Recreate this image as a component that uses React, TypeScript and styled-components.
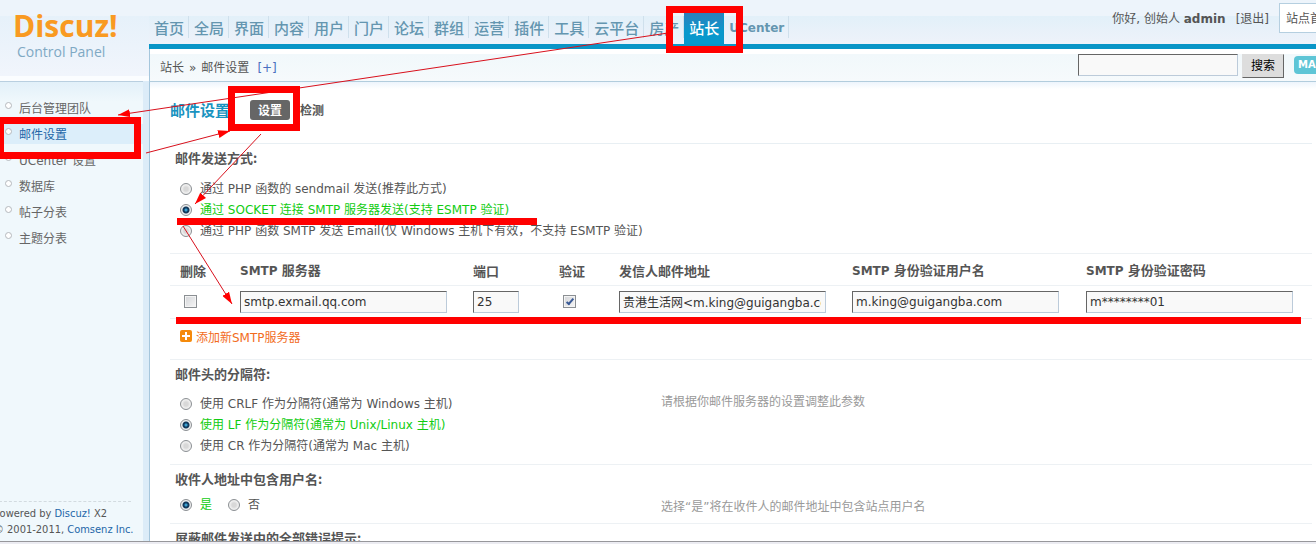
import React from 'react';
import styled, { createGlobalStyle } from 'styled-components';

const sans = '"DejaVu Sans", "Noto Sans CJK SC", sans-serif';
const cjk = '"Noto Sans CJK SC", "DejaVu Sans", sans-serif';
const narrow = '"DejaVu Sans Condensed", "Noto Sans CJK SC", sans-serif';

const GlobalStyle = createGlobalStyle`
  *, *::before, *::after { box-sizing: border-box; }
  body {
    margin: 0;
    background: #fff;
    color: #555;
    font: 12px/20px ${sans};
    overflow: hidden;
  }
  a { color: inherit; text-decoration: none; }
  button, input { font: inherit; }
  ul { list-style: none; margin: 0; padding: 0; }
`;

const Page = styled.div`
  position: relative;
  display: flex;
  flex-direction: column;
  height: 100vh;
  overflow: hidden;
`;

const Columns = styled.div`
  display: flex;
  flex: 1;
  min-height: 0;
  background: linear-gradient(#edf4fb 0 16px, #e2f0f9 16px, #eef2fa 44px, transparent 44px);
`;

const Sidebar = styled.aside`
  display: flex;
  flex-direction: column;
  flex: none;
  width: 149px;
  background: #f0f8fc;
`;

const Logo = styled.div`
  height: 81px;
  padding: 10px 0 0 13px;
  border-bottom: 5px solid #fbfdff;
  background: linear-gradient(#edf4fb 0 16px, #e6f1fa 16px, #f1f5fc);
  font-family: "Open Sans", sans-serif;
`;

const LogoName = styled.div`
  color: #f99a22;
  font-size: 30px;
  font-weight: 700;
  line-height: 32px;
`;

const LogoSub = styled.div`
  padding-left: 4px;
  color: #7fa9c4;
  font-size: 14px;
  line-height: 20px;
`;

const SideBody = styled.div`
  display: flex;
  flex: 1;
  flex-direction: column;
  justify-content: space-between;
  border-right: 6px solid #dcecf8;
`;

const Menu = styled.ul`
  padding-top: 16px !important;
  border-top: 1px solid #b9cfe0;
  background: linear-gradient(#e2f0f9, #f0f8fc 20px);
`;

const MenuLink = styled.a<{ $active?: boolean }>`
  display: flex;
  align-items: center;
  gap: 7px;
  height: 20px;
  margin-bottom: 6px;
  padding: 2px 0 0 5px;
  color: ${(p) => (p.$active ? '#2366a8' : '#666')};
  background: ${(p) => (p.$active ? '#dceefa' : 'none')};

  &::before {
    content: '';
    width: 7px;
    height: 7px;
    margin-bottom: 7px;
    border: 1px solid #b5b9bd;
    border-radius: 50%;
    background: #fff;
  }
`;

const Copyright = styled.footer`
  margin: 0 12px 3px -6px;
  padding-top: 4px;
  border-top: 1px dashed #d3dbe0;
  font: 11px/16px ${narrow};
  white-space: nowrap;

  a { color: #2366a8; }
`;

const Main = styled.div`
  display: flex;
  flex: 1;
  flex-direction: column;
  min-width: 0;
`;

const TopBar = styled.header`
  display: flex;
  justify-content: space-between;
  flex: none;
  height: 49px;
  border-bottom: 5px solid #0995c7;
`;

const Nav = styled.nav`
  display: flex;
  padding-top: 13px;
`;

const NavLink = styled.a<{ $active?: boolean; $latin?: boolean }>`
  padding: 0 4px 0 5px;
  border-right: 1px solid ${(p) => (p.$active ? '#0995c7' : '#cfe0ec')};
  border-image: ${(p) => (p.$active ? 'none' : 'linear-gradient(transparent 4px, #cfe0ec 4px 24px, transparent 24px) 1')};
  color: ${(p) => (p.$active ? '#fff' : '#6496b0')};
  background: ${(p) => (p.$active ? 'linear-gradient(#2e7fbc, #0898cc 60%)' : 'none')};
  font-family: ${(p) => (p.$latin ? sans : cjk)};
  font-size: ${(p) => (p.$latin ? 12 : 15)}px;
  font-weight: ${(p) => (p.$latin ? 700 : 500)};
  line-height: 30px;
  white-space: nowrap;
`;

const Account = styled.div`
  display: flex;
  gap: 10px;
  height: 30px;
  margin: 3px -26px 0 0;
  line-height: 32px;
  white-space: nowrap;
`;

const HomeLink = styled.a`
  padding: 0 6px;
  width: 63px;
  border: 1px solid #b5cfe0;
  background: #fff;
  line-height: 30px;
`;

const SubBar = styled.div`
  display: flex;
  justify-content: space-between;
  flex: none;
  height: 33px;
  padding: 5px 0 0 10px;
  border-left: 1px solid #a5c6dc;
  border-bottom: 1px solid #b2cddd;
  background: linear-gradient(#fff 0 5px, #f1f8fb 5px, #f6fafc);
`;

const Crumbs = styled.div`
  display: flex;
  gap: 5px;
  padding-top: 4px;

  a:last-child { margin-left: 3px; color: #4a6fc0; }
`;

const Search = styled.form`
  display: flex;
  align-items: flex-start;
  gap: 4px;
  margin-right: -16px;
`;

const TextField = styled.input<{ $width: number }>`
  display: block;
  width: ${(p) => p.$width}px;
  height: 22px;
  padding: 0 4px 0 3px;
  border: 1px solid;
  border-color: #666 #bccbda #bccbda #666;
  border-radius: 0;
  background: #f9f9f9;
  color: #333;
`;

const SearchButton = styled.button`
  width: 42px;
  height: 24px;
  padding: 0;
  border: 1px solid;
  border-color: #ddd #666 #666 #ddd;
  background: #ddd;
  color: #000;
`;

const MapLink = styled.a`
  width: 38px;
  height: 18px;
  margin: 2px 0 0 6px;
  padding-left: 4px;
  border-radius: 4px;
  background: #5ec5d6;
  color: #fff;
  font-size: 10px;
  font-weight: 700;
  line-height: 18px;
`;

const Content = styled.main`
  flex: 1;
  min-height: 0;
  padding: 0 4px 0 20px;
  overflow: hidden;
  border-left: 1px solid #a5c6dc;
  background: linear-gradient(#edf5fc, #fff 7px);
`;

const TitleRow = styled.div`
  display: flex;
  align-items: center;
  gap: 20px;
  height: 62px;
  padding-bottom: 6px;
  border-bottom: 1px solid #e8eff3;
`;

const Title = styled.h1`
  margin: 0;
  color: #1993c0;
  font: 700 15px/20px ${cjk};
`;

const Tabs = styled.div`
  display: flex;
  gap: 2px;
`;

const Tab = styled.button<{ $active?: boolean }>`
  height: 20px;
  padding: 0 8px;
  border: 0;
  border-radius: 3px;
  background: ${(p) => (p.$active ? '#666' : 'none')};
  color: ${(p) => (p.$active ? '#fff' : '#555')};
  font: 700 12px/20px ${cjk};
`;

const Setting = styled.fieldset<{ $roomy?: boolean }>`
  display: block;
  min-width: 0;
  margin: 0;
  padding: 3px 0 ${(p) => (p.$roomy ? 12 : 7)}px;
  border: 0;
  border-bottom: 1px solid #edf1f4;
`;

const SettingTitle = styled.legend`
  float: left;
  width: 100%;
  padding: 0 5px;
  color: #555;
  font: 700 13px/21px ${cjk};
`;

const SettingBody = styled.div<{ $compact?: boolean }>`
  display: grid;
  grid-template-columns: 481px 1fr;
  clear: both;
  padding: ${(p) => (p.$compact ? 6 : 10)}px 0 0 10px;
`;

const Options = styled.div<{ $inline?: boolean }>`
  display: flex;
  flex-direction: ${(p) => (p.$inline ? 'row' : 'column')};
  column-gap: 16px;
  white-space: nowrap;
`;

const Option = styled.label<{ $checked?: boolean }>`
  display: flex;
  align-items: center;
  gap: 8px;
  height: 21px;
  color: ${(p) => (p.$checked ? '#1c1' : '#555')};
`;

const Radio = styled.input`
  appearance: none;
  width: 12px;
  height: 12px;
  margin: 0;
  border: 1px solid #8b8f93;
  border-radius: 50%;
  background: radial-gradient(circle, #d8d8d8 0 2px, #eee 4px);

  &:checked {
    background: radial-gradient(circle at 50% 50%, #3ba0d0 0 1px, #11395c 2px 3px, #eee 4px);
  }
`;

const Hint = styled.p<{ $low?: boolean }>`
  margin: 0;
  padding-top: ${(p) => (p.$low ? 4 : 0)}px;
  color: #999;
  line-height: 17px;
`;

const ServerTable = styled.table`
  width: 100%;
  table-layout: fixed;
  border-collapse: collapse;
  text-align: left;

  tr { border-bottom: 1px solid #edf1f4; }
  th, td { padding: 0 5px; white-space: nowrap; }
  th { height: 31px; padding-top: 3px; font: 700 13px/20px ${cjk}; }
  td { height: 33px; }
  th:first-child, td:first-child { padding-left: 10px; }
  td input[type='checkbox'] { margin-left: 4px; }
`;

const Latin = styled.span`
  font: 700 12px/20px ${sans};
`;

const Checkbox = styled.input`
  display: grid;
  place-items: center;
  appearance: none;
  width: 13px;
  height: 13px;
  margin: 0;
  border: 1px solid #8b8f93;
  background: linear-gradient(135deg, #d3d5d8, #f6f6f6);
  box-shadow: inset 0 0 0 1px #f4f4f4;

  &:checked::before {
    content: '';
    width: 4px;
    height: 8px;
    margin-bottom: 2px;
    border: solid #3a5a96;
    border-width: 0 2px 2px 0;
    transform: rotate(40deg);
  }
`;

const AddRow = styled.div`
  height: 41px;
  padding: 8px 10px 0;
  border-bottom: 1px solid #edf1f4;
`;

const AddLink = styled.a`
  display: inline-flex;
  align-items: center;
  gap: 4px;
  height: 22px;
  color: #f26c1d;

  svg { margin-bottom: 4px; }
`;

const StatusEdge = styled.div`
  flex: none;
  height: 3px;
  border-top: 1px solid #97979b;
  background: #ececf2;
`;

const Annotations = styled.svg`
  position: absolute;
  top: 0;
  left: 0;
  pointer-events: none;
`;

const navItems = ['首页', '全局', '界面', '内容', '用户', '门户', '论坛', '群组', '运营', '插件', '工具', '云平台', '房产', '站长', 'UCenter'];
const menuItems = ['后台管理团队', '邮件设置', 'UCenter 设置', '数据库', '帖子分表', '主题分表'];

type RadioGroupProps = { name: string; options: string[]; selected: number; inline?: boolean };

function RadioGroup({ name, options, selected, inline }: RadioGroupProps) {
  const [value, setValue] = React.useState(selected);
  return (
    <Options $inline={inline}>
      {options.map((text, i) => (
        <Option key={text} $checked={i === value}>
          <Radio type="radio" name={name} checked={i === value} onChange={() => setValue(i)} />
          {text}
        </Option>
      ))}
    </Options>
  );
}

const arrows = [
  { from: [668, 33], to: [118, 115] },
  { from: [146, 153], to: [230, 131] },
  { from: [261, 134], to: [195, 204] },
  { from: [183, 226], to: [232, 304] },
];

export default function App() {
  return (
    <Page>
      <GlobalStyle />
      <Columns>
        <Sidebar>
          <Logo>
            <LogoName>Discuz!</LogoName>
            <LogoSub>Control Panel</LogoSub>
          </Logo>
          <SideBody>
            <Menu>
              {menuItems.map((text) => (
                <li key={text}>
                  <MenuLink href="#" $active={text === '邮件设置'}>{text}</MenuLink>
                </li>
              ))}
            </Menu>
            <Copyright>
              <div>Powered by <a href="#">Discuz!</a> X2</div>
              <div>© 2001-2011, <a href="#">Comsenz Inc.</a></div>
            </Copyright>
          </SideBody>
        </Sidebar>
        <Main>
          <TopBar>
            <Nav>
              {navItems.map((text) => (
                <NavLink key={text} href="#" $active={text === '站长'} $latin={text === 'UCenter'}>{text}</NavLink>
              ))}
            </Nav>
            <Account>
              <span>你好, 创始人 <b>admin</b></span>
              <a href="#">[退出]</a>
              <HomeLink href="#">站点首页</HomeLink>
            </Account>
          </TopBar>
          <SubBar>
            <Crumbs>
              <span>站长</span>
              <span>»</span>
              <span>邮件设置</span>
              <a href="#">[+]</a>
            </Crumbs>
            <Search>
              <TextField $width={160} aria-label="搜索" />
              <SearchButton type="button">搜索</SearchButton>
              <MapLink href="#">MAP</MapLink>
            </Search>
          </SubBar>
          <Content>
            <TitleRow>
              <Title>邮件设置</Title>
              <Tabs>
                <Tab type="button" $active>设置</Tab>
                <Tab type="button">检测</Tab>
              </Tabs>
            </TitleRow>
            <Setting $roomy>
              <SettingTitle>邮件发送方式:</SettingTitle>
              <SettingBody>
                <RadioGroup
                  name="method"
                  selected={1}
                  options={[
                    '通过 PHP 函数的 sendmail 发送(推荐此方式)',
                    '通过 SOCKET 连接 SMTP 服务器发送(支持 ESMTP 验证)',
                    '通过 PHP 函数 SMTP 发送 Email(仅 Windows 主机下有效，不支持 ESMTP 验证)',
                  ]}
                />
              </SettingBody>
            </Setting>
            <ServerTable>
              <colgroup>
                <col style={{ width: 65 }} />
                <col style={{ width: 233 }} />
                <col style={{ width: 86 }} />
                <col style={{ width: 60 }} />
                <col style={{ width: 233 }} />
                <col style={{ width: 234 }} />
                <col />
              </colgroup>
              <thead>
                <tr>
                  <th>删除</th>
                  <th><Latin>SMTP </Latin>服务器</th>
                  <th>端口</th>
                  <th>验证</th>
                  <th>发信人邮件地址</th>
                  <th><Latin>SMTP </Latin>身份验证用户名</th>
                  <th><Latin>SMTP </Latin>身份验证密码</th>
                </tr>
              </thead>
              <tbody>
                <tr>
                  <td><Checkbox type="checkbox" aria-label="删除" /></td>
                  <td><TextField $width={207} aria-label="SMTP 服务器" defaultValue="smtp.exmail.qq.com" /></td>
                  <td><TextField $width={46} aria-label="端口" defaultValue="25" /></td>
                  <td><Checkbox type="checkbox" aria-label="验证" defaultChecked /></td>
                  <td><TextField $width={207} aria-label="发信人邮件地址" defaultValue="贵港生活网<m.king@guigangba.com>" /></td>
                  <td><TextField $width={207} aria-label="SMTP 身份验证用户名" defaultValue="m.king@guigangba.com" /></td>
                  <td><TextField $width={207} aria-label="SMTP 身份验证密码" defaultValue="m********01" /></td>
                </tr>
              </tbody>
            </ServerTable>
            <AddRow>
              <AddLink href="#">
                <svg width="12" height="12" viewBox="0 0 12 12" aria-hidden="true">
                  <rect width="12" height="12" rx="2" fill="#f58a0b" />
                  <path d="M6 2v8M2 6h8" stroke="#fff" strokeWidth="2" />
                </svg>
                添加新SMTP服务器
              </AddLink>
            </AddRow>
            <Setting>
              <SettingTitle>邮件头的分隔符:</SettingTitle>
              <SettingBody>
                <RadioGroup
                  name="delimiter"
                  selected={1}
                  options={[
                    '使用 CRLF 作为分隔符(通常为 Windows 主机)',
                    '使用 LF 作为分隔符(通常为 Unix/Linux 主机)',
                    '使用 CR 作为分隔符(通常为 Mac 主机)',
                  ]}
                />
                <Hint>请根据你邮件服务器的设置调整此参数</Hint>
              </SettingBody>
            </Setting>
            <Setting>
              <SettingTitle>收件人地址中包含用户名:</SettingTitle>
              <SettingBody $compact>
                <RadioGroup name="include" selected={0} inline options={['是', '否']} />
                <Hint $low>选择“是”将在收件人的邮件地址中包含站点用户名</Hint>
              </SettingBody>
            </Setting>
            <Setting>
              <SettingTitle>屏蔽邮件发送中的全部错误提示:</SettingTitle>
            </Setting>
          </Content>
        </Main>
      </Columns>
      <StatusEdge />
      <Annotations width="1316" height="544" viewBox="0 0 1316 544" aria-hidden="true">
        <defs>
          <marker id="head" markerUnits="userSpaceOnUse" markerWidth="12" markerHeight="8" refX="12" refY="4" orient="auto">
            <path d="M0 0 12 4 0 8z" fill="#f00" />
          </marker>
        </defs>
        {arrows.map(({ from, to }) => (
          <line key={from.join()} x1={from[0]} y1={from[1]} x2={to[0]} y2={to[1]} stroke="#d8101c" markerEnd="url(#head)" />
        ))}
        <path d="M0 117H141V159H0zM4 124V152H134V124z" fill="#f00" fillRule="evenodd" />
        <path d="M228 86H300V131H228zM235 93V124H293V93z" fill="#f00" fillRule="evenodd" />
        <path d="M666 6H743V53H666zM673 13V46H736V13z" fill="#f00" fillRule="evenodd" />
        <path d="M177 218H537V225H177zM176 317H1301V324H176z" fill="#f00" />
      </Annotations>
    </Page>
  );
}
